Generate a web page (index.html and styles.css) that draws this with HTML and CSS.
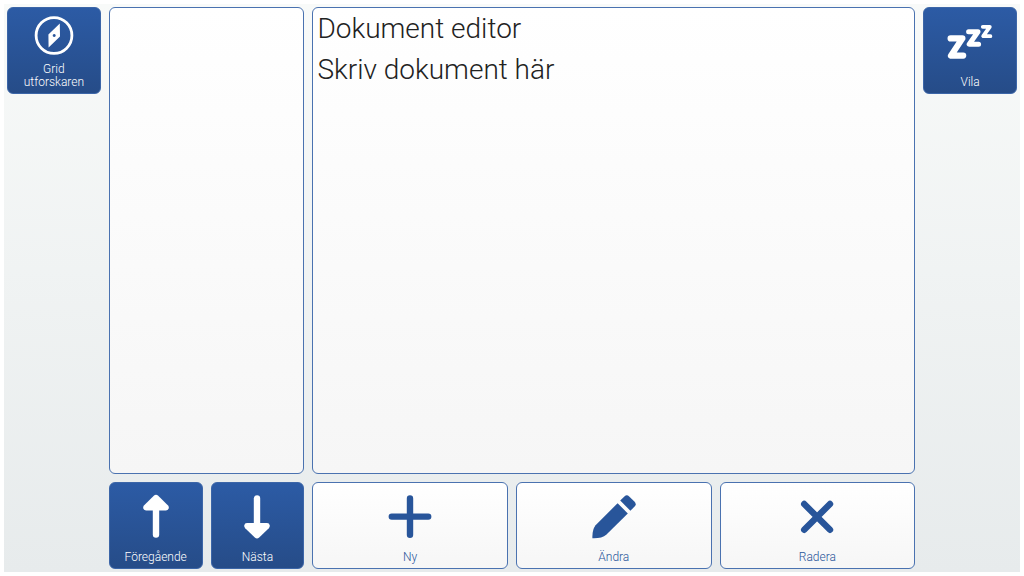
FILE: index.html
```
<!DOCTYPE html>
<html lang="sv">
<head>
    <meta charset="UTF-8">
    <meta name="viewport" content="width=device-width, initial-scale=1.0">
    <title>Dokument editor</title>
    <link rel="stylesheet" href="styles.css">
</head>
<body>
  <main class="grid">
    <button class="cell blue explorer">
      <svg class="icon" viewBox="0 0 44 44">
        <circle cx="22" cy="21.5" r="17.9" fill="none" stroke="currentColor" stroke-width="2.8"/>
        <path fill="currentColor" fill-rule="evenodd" d="M27.8 9.6 L28 22.6 L16.6 33.4 L16.4 20.6 Z M22.2 20 a1.5 1.5 0 1 0 0.01 0 Z"/>
      </svg>
      <span class="label">Grid utforskaren</span>
    </button>

    <section class="cell panel documents" aria-label="Dokument"></section>

    <textarea class="cell panel editor" aria-label="Dokument editor" spellcheck="false">Dokument editor
Skriv dokument här</textarea>

    <button class="cell blue rest">
      <svg class="icon" viewBox="0 0 44 44">
        <g fill="none" stroke="currentColor" stroke-linejoin="round" stroke-linecap="round">
          <path stroke-width="6.2" d="M2.6 24.4 H14.4 L3 41.6 H15.2"/>
          <path stroke-width="5" d="M20.6 17.8 H30 L21.2 30.2 H30.6"/>
          <path stroke-width="3.8" d="M34.8 12.8 H41.8 L35.2 22.2 H42.4"/>
        </g>
      </svg>
      <span class="label">Vila</span>
    </button>

    <button class="cell blue previous">
      <svg class="icon" viewBox="0 0 44 44">
        <path fill="none" stroke="currentColor" stroke-width="6.4" stroke-linecap="round" d="M22 12 V39.6"/>
        <path fill="currentColor" d="M19.8 0.8 Q22 -1.2 24.2 0.8 L33.8 10.2 Q35 11.4 34.8 13 Q34.4 15.4 32 15.4 H12 Q9.6 15.4 9.2 13 Q9 11.4 10.2 10.2 Z"/>
      </svg>
      <span class="label">Föregående</span>
    </button>
    <button class="cell blue next">
      <svg class="icon" viewBox="0 0 44 44">
        <path fill="none" stroke="currentColor" stroke-width="6.4" stroke-linecap="round" d="M22 32 V3.5"/>
        <path fill="currentColor" d="M19.8 42.6 Q22 44.6 24.2 42.6 L33.8 33.2 Q35 32 34.8 30.4 Q34.4 28 32 28 H12 Q9.6 28 9.2 30.4 Q9 32 10.2 33.2 Z"/>
      </svg>
      <span class="label">Nästa</span>
    </button>

    <button class="cell white new">
      <svg class="icon" viewBox="0 0 44 44">
        <path fill="none" stroke="currentColor" stroke-width="6.4" stroke-linecap="round" d="M22 3.4 V39.8 M3.8 21.6 H40.2"/>
      </svg>
      <span class="label">Ny</span>
    </button>
    <button class="cell white edit">
      <svg class="icon" viewBox="0 0 44 44">
        <path fill="currentColor" d="M25.6 8.2 L35.8 18.4 L14.5 39.4 Q9.5 43.6 0.4 43.2 Q0 35 3.6 30.2 Z"/>
        <path fill="currentColor" d="M28.2 5.6 L32.4 1.4 Q34.8 -0.8 37.2 1.4 L42.6 6.8 Q44.8 9.2 42.6 11.6 L38.4 15.8 Z"/>
      </svg>
      <span class="label">Ändra</span>
    </button>
    <button class="cell white delete">
      <svg class="icon" viewBox="0 0 44 44">
        <path fill="none" stroke="currentColor" stroke-width="6.4" stroke-linecap="round" d="M9.2 9 L35 34.8 M35 9 L9.2 34.8"/>
      </svg>
      <span class="label">Radera</span>
    </button>
  </main>
</body>
</html>
```

FILE: styles.css
```
* {
  box-sizing: border-box;
}

html, body {
  margin: 0;
  height: 100%;
}

body {
  padding: 4px;
  background: #ffffff;
  font-family: Roboto, sans-serif;
  font-weight: 300;
}

/* 10 x 6 cells */
.grid {
  display: grid;
  grid-template-columns: repeat(10, minmax(0, 1fr));
  grid-template-rows: repeat(6, minmax(0, 1fr));
  gap: 8px;
  height: 100%;
  padding: 3px;
  background: linear-gradient(#f8faf9, #e7ebec);
}

.cell {
  width: 100%;
  height: 100%;
  margin: 0;
  border: 1px solid #4a72b0;
  border-radius: 6px;
  font-family: inherit;
  font-weight: inherit;
}

.panel,
.white {
  background: linear-gradient(#ffffff, #f6f6f6);
}

button.cell {
  display: flex;
  flex-direction: column;
  align-items: center;
  justify-content: space-between;
  padding: 6px 4px 4px;
  cursor: pointer;
}

.blue {
  border-color: #3c66a8;
  background: linear-gradient(#2c5ba5, #264c88);
  color: #ffffff;
}

.white {
  color: #28559a;
}

.icon {
  flex: none;
  width: 44px;
  height: 44px;
  margin-top: 6px;
  overflow: visible;
}

.label {
  font-size: 12px;
  line-height: 13px;
}

.explorer { grid-area: 1 / 1; }
.documents { grid-area: 1 / 2 / 6 / 4; }
.editor { grid-area: 1 / 4 / 6 / 10; }
.rest { grid-area: 1 / 10; }
.previous { grid-area: 6 / 2; }
.next { grid-area: 6 / 3; }
.new { grid-area: 6 / 4 / 7 / 6; }
.edit { grid-area: 6 / 6 / 7 / 8; }
.delete { grid-area: 6 / 8 / 7 / 10; }

/* top row icons sit higher, the label may take two lines */
.explorer .icon,
.rest .icon {
  margin-top: 0;
}

.editor {
  display: block;
  padding: 0 4px;
  outline: none;
  resize: none;
  color: #222222;
  font-size: 28px;
  line-height: 41px;
}
```
